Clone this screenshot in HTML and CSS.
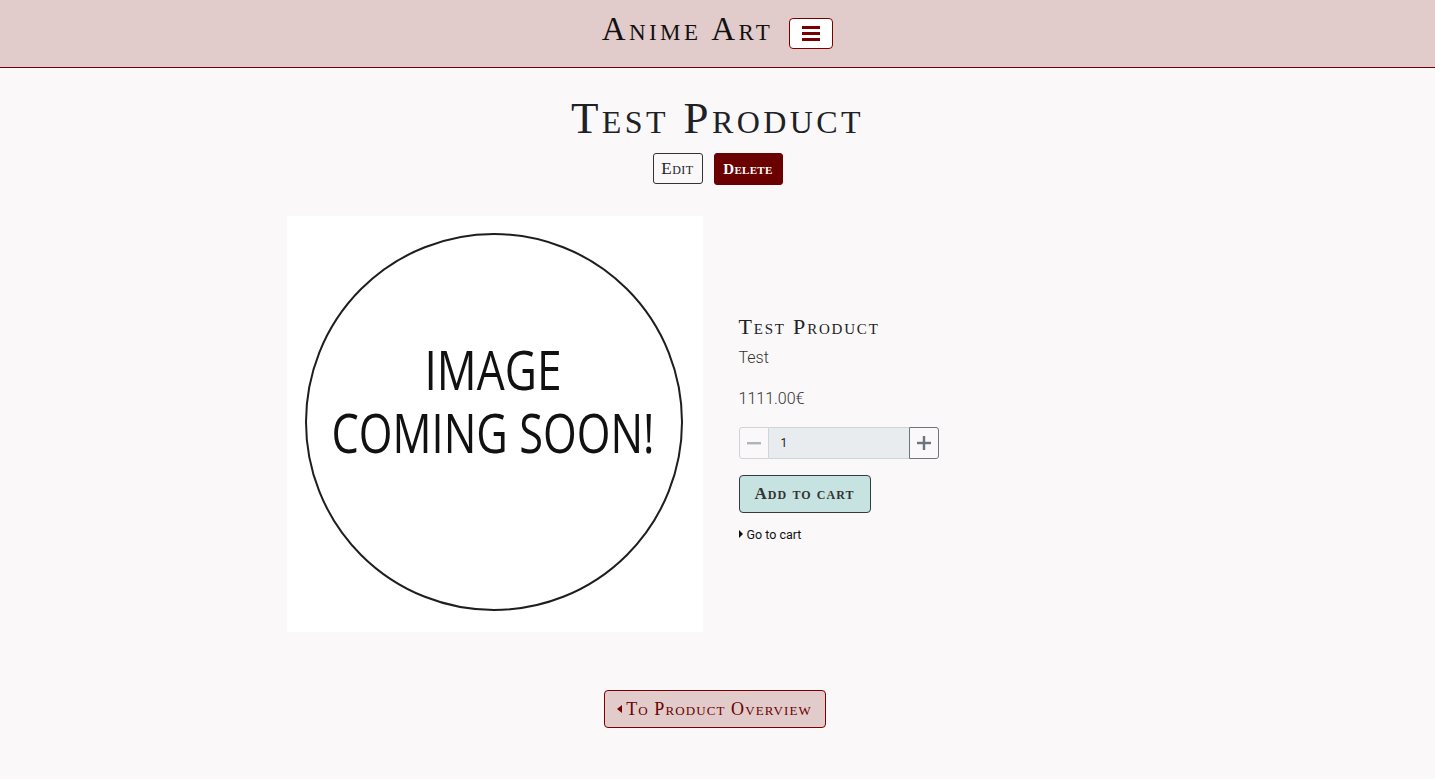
FILE: index.html
```html
<!DOCTYPE html>
<html lang="en">
<head>
<meta charset="utf-8">
<title>Anime Art - Test Product</title>
<link rel="stylesheet" href="styles.css">
</head>
<body>
<header class="navbar">
  <div class="nav-inner">
    <a class="brand" href="#">Anime Art</a>
    <button class="toggler" type="button" aria-label="Menu">
      <span class="bar"></span><span class="bar"></span><span class="bar"></span>
    </button>
  </div>
</header>
<main class="page">
  <h1 class="title">Test Product</h1>
  <div class="admin-actions">
    <a class="btn btn-edit" href="#">Edit</a>
    <a class="btn btn-delete" href="#">Delete</a>
  </div>
  <section class="product">
    <div class="product-image">
      <svg width="416" height="416" viewBox="0 0 416 416" xmlns="http://www.w3.org/2000/svg">
        <rect width="416" height="416" fill="#ffffff"/>
        <circle cx="207" cy="206" r="188" fill="none" stroke="#1e1e1e" stroke-width="2"/>
        <text x="206" y="174" text-anchor="middle" font-family="Open Sans" font-weight="400" font-size="55" fill="#111" textLength="137" lengthAdjust="spacingAndGlyphs">IMAGE</text>
        <text x="206" y="237" text-anchor="middle" font-family="Open Sans" font-weight="400" font-size="55" fill="#111" textLength="323" lengthAdjust="spacingAndGlyphs">COMING SOON!</text>
      </svg>
    </div>
    <div class="product-details">
      <h2 class="product-name">Test Product</h2>
      <p class="desc">Test</p>
      <p class="price">1111.00€</p>
      <div class="qty">
        <button class="qty-btn minus" type="button" aria-label="Decrease">
          <svg width="14" height="14" viewBox="0 0 14 14"><rect x="0" y="6" width="14" height="2.4" fill="#adb5bd"/></svg>
        </button>
        <input class="qty-input" type="text" value="1">
        <button class="qty-btn plus" type="button" aria-label="Increase">
          <svg width="14" height="14" viewBox="0 0 14 14"><rect x="0" y="5.8" width="14" height="2.4" fill="#6c757d"/><rect x="5.8" y="0" width="2.4" height="14" fill="#6c757d"/></svg>
        </button>
      </div>
      <button class="btn btn-cart" type="button">Add to cart</button>
      <a class="goto" href="#"><span class="caret-r"></span>Go to cart</a>
    </div>
  </section>
  <div class="back-wrap">
    <a class="btn btn-back" href="#"><span class="caret-l"></span>To Product Overview</a>
  </div>
</main>
</body>
</html>
```
FILE: styles.css
```css
* { box-sizing: border-box; }
html, body { margin: 0; padding: 0; }
body {
  background: #faf8f9;
  font-family: Roboto, "Liberation Sans", Arial, sans-serif;
  font-weight: 300;
  color: #212529;
}
.navbar {
  background: #e2cbcb;
  height: 68px;
  border-bottom: 1px solid #6b0000;
  display: flex;
  align-items: center;
  justify-content: center;
}
.nav-inner {
  display: flex;
  align-items: center;
  gap: 16px;
  margin-top: -4px;
}
.brand {
  font-family: "Liberation Serif", serif;
  font-variant: small-caps;
  font-size: 33px;
  color: #111;
  text-decoration: none;
  letter-spacing: 3.4px;
  margin-top: -4px;
}
.toggler {
  width: 44px;
  height: 31px;
  background: #fff;
  border: 1px solid #7a0000;
  border-radius: 4px;
  display: flex;
  flex-direction: column;
  align-items: center;
  justify-content: center;
  gap: 3px;
  padding: 0;
  margin-top: 4px;
}
.toggler .bar {
  display: block;
  width: 18px;
  height: 3px;
  background: #7a0000;
}
.page {
  display: flex;
  flex-direction: column;
  align-items: center;
}
.title {
  font-family: "Liberation Serif", serif;
  font-variant: small-caps;
  font-weight: 400;
  font-size: 45px;
  letter-spacing: 3.4px;
  margin: 23px 0 8px;
  line-height: 1.2;
  color: #1e2125;
}
.admin-actions {
  display: flex;
  gap: 11px;
}
.btn {
  font-family: "Liberation Serif", serif;
  font-variant: small-caps;
  text-decoration: none;
  display: inline-flex;
  align-items: center;
  justify-content: center;
  border-radius: 3px;
  cursor: pointer;
}
.btn-edit {
  height: 31px;
  width: 50px;
  border: 1px solid #333;
  color: #222;
  font-size: 17px;
  letter-spacing: 0.5px;
  background: transparent;
}
.btn-delete {
  height: 32px;
  width: 69px;
  background: #6b0000;
  color: #fff;
  font-size: 15px;
  font-weight: 700;
  letter-spacing: 0.3px;
  border: 1px solid #6b0000;
}
.product {
  display: flex;
  align-items: center;
  gap: 36px;
  width: 862px;
  margin-top: 31px;
}
.product-image { flex: 0 0 416px; height: 416px; }
.product-image svg { display: block; }
.product-details { flex: 1; padding-top: 7px; }
.product-name {
  font-family: "Liberation Serif", serif;
  font-variant: small-caps;
  font-weight: 400;
  font-size: 22px;
  letter-spacing: 1.8px;
  margin: 0 0 8px;
  color: #1e2125;
}
.desc, .price {
  font-size: 16px;
  margin: 0 0 22px;
  color: #333;
}
.price { margin-bottom: 19px; }
.qty {
  display: flex;
  width: 200px;
  height: 32px;
}
.qty-btn {
  width: 30px;
  height: 32px;
  padding: 0;
  display: flex;
  align-items: center;
  justify-content: center;
  background: #faf8f9;
}
.qty-btn.minus { border: 1px solid #ced4da; border-radius: 3px 0 0 3px; }
.qty-btn.plus { border: 1px solid #6c757d; border-radius: 0 3px 3px 0; }
.qty-input {
  flex: 1;
  min-width: 0;
  height: 32px;
  border: 1px solid #ced4da;
  border-left: none;
  border-right: none;
  background: #e9ecef;
  font-family: Roboto, "Liberation Sans", sans-serif;
  font-size: 12px;
  padding: 0 12px;
  color: #222;
}
.btn-cart {
  margin-top: 16px;
  width: 132px;
  height: 38px;
  background: #c7e3e1;
  border: 1px solid #343a40;
  border-radius: 4px;
  color: #333;
  font-size: 17px;
  font-weight: 700;
  letter-spacing: 1px;
}
.goto {
  display: flex;
  align-items: center;
  margin-top: 14px;
  font-family: Roboto, "Liberation Sans", Arial, sans-serif;
  font-weight: 400;
  font-size: 12.5px;
  color: #111;
  text-decoration: none;
}
.caret-r {
  width: 0; height: 0;
  border-top: 4px solid transparent;
  border-bottom: 4px solid transparent;
  border-left: 4px solid #111;
  margin-right: 4px;
}
.back-wrap { margin-top: 58px; margin-bottom: 50px; margin-right: 6px; }
.btn-back {
  height: 38px;
  width: 222px;
  background: #e2cbcb;
  border: 1px solid #7a0000;
  border-radius: 4px;
  color: #6b0000;
  font-size: 18px;
  letter-spacing: 1.1px;
}
.caret-l {
  width: 0; height: 0;
  border-top: 4.5px solid transparent;
  border-bottom: 4.5px solid transparent;
  border-right: 5px solid #7a0000;
  margin-right: 4px;
}
```
